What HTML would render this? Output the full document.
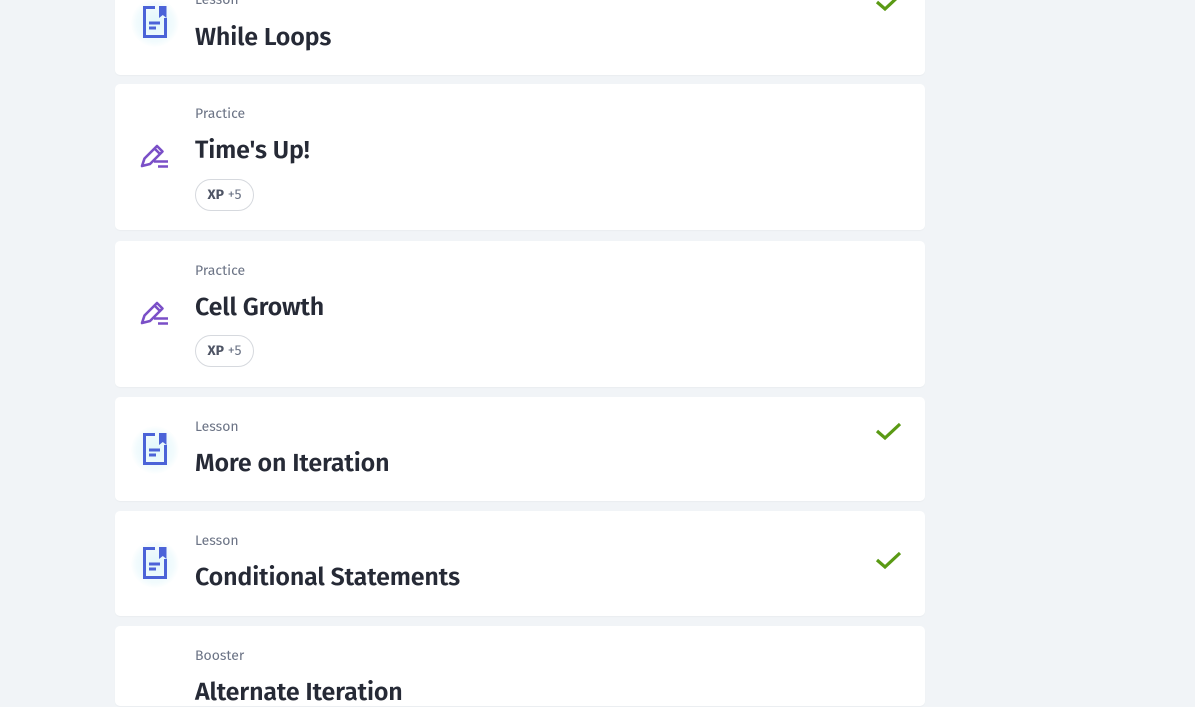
<!DOCTYPE html>
<html><head><style>
body{margin:0;width:1195px;height:684px;overflow:hidden;background:#f1f4f7;font-family:"Fira Sans","Liberation Sans",sans-serif;position:relative}
.card{position:absolute;left:115px;width:810px;background:#fff;border-radius:5px;box-shadow:0 1px 1px rgba(0,0,0,.03)}
.lab{position:absolute;left:80px;font-size:14px;color:#6b7385}
.tit{position:absolute;left:80px;font-size:25px;font-weight:600;color:#262a36;letter-spacing:-0.15px}
.xp{position:absolute;left:80px;width:59px;height:32px;border:1px solid #d6d9de;border-radius:16px;box-sizing:border-box;font-size:14px;color:#6b7385;line-height:30px;text-align:center}
.xp b{color:#4f5565}
.ic{position:absolute;left:27px}
.glow{position:absolute;left:16px;width:48px;height:48px;border-radius:50%;background:radial-gradient(circle,#e0f7fb 0%,#f2fbfd 55%,rgba(255,255,255,0) 72%)}
.chk{position:absolute;left:760px}
</style></head><body>
<svg width="0" height="0" style="position:absolute">
<defs>
<g id="doc"><path d="M13 2.5H2.5v29h21V13" fill="none" stroke="#4b63d8" stroke-width="3"/><path d="M17 1h7.5v12l-3.7-3-3.8 3z" fill="#4b63d8"/><path d="M7 18h11M7 23h7" stroke="#4b63d8" stroke-width="3"/></g>
<g id="pen"><path d="M3 26l2.5-7.5 12.5-12.5 5.5 5.5-12.5 12.5z M15.5 8.5l5.5 5.5" fill="none" stroke="#7a4fc7" stroke-width="2.6" stroke-linejoin="round"/><path d="M15 21.5h14M19 26.5h10" stroke="#7a4fc7" stroke-width="2.6"/></g>
<g id="ck"><path d="M2 12l8 7 15-14" fill="none" stroke="#5a9a14" stroke-width="3.2"/></g>
</defs></svg>

<div class="card" style="top:-30px;height:105px">
<div class="glow" style="top:29px"></div>
<svg class="ic" style="top:35px" width="26" height="34"><use href="#doc"/></svg>
<div class="lab" style="top:21px">Lesson</div>
<div class="tit" style="top:52px">While Loops</div>
<svg class="chk" style="top:20px" width="28" height="24"><use href="#ck"/></svg>
</div>

<div class="card" style="top:84px;height:146px">
<svg class="ic" style="top:56px;left:24px" width="30" height="30"><use href="#pen"/></svg>
<div class="lab" style="top:21px">Practice</div>
<div class="tit" style="top:51px">Time's Up!</div>
<div class="xp" style="top:95px"><b>XP</b> +5</div>
</div>

<div class="card" style="top:241px;height:146px">
<svg class="ic" style="top:56px;left:24px" width="30" height="30"><use href="#pen"/></svg>
<div class="lab" style="top:21px">Practice</div>
<div class="tit" style="top:51px">Cell Growth</div>
<div class="xp" style="top:94px"><b>XP</b> +5</div>
</div>

<div class="card" style="top:397px;height:104px">
<div class="glow" style="top:29px"></div>
<svg class="ic" style="top:35px" width="26" height="34"><use href="#doc"/></svg>
<div class="lab" style="top:21px">Lesson</div>
<div class="tit" style="top:51px">More on Iteration</div>
<svg class="chk" style="top:22px" width="28" height="24"><use href="#ck"/></svg>
</div>

<div class="card" style="top:511px;height:105px">
<div class="glow" style="top:29px"></div>
<svg class="ic" style="top:35px" width="26" height="34"><use href="#doc"/></svg>
<div class="lab" style="top:21px">Lesson</div>
<div class="tit" style="top:51px">Conditional Statements</div>
<svg class="chk" style="top:37px" width="28" height="24"><use href="#ck"/></svg>
</div>

<div class="card" style="top:626px;height:80px">
<div class="lab" style="top:21px">Booster</div>
<div class="tit" style="top:51px">Alternate Iteration</div>
</div>
</body></html>
